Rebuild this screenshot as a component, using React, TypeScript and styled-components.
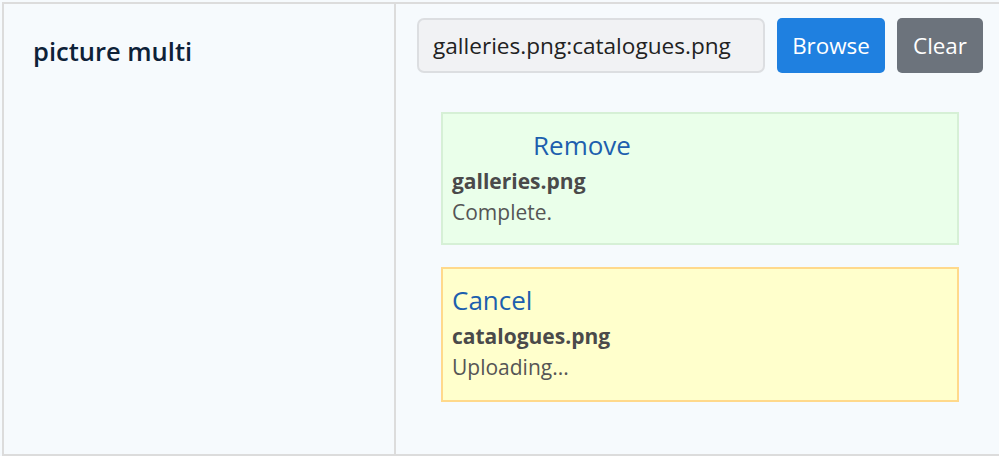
import React from "react";
import styled, { createGlobalStyle } from "styled-components";

const GlobalStyle = createGlobalStyle`
  html, body {
    margin: 0;
    padding: 0;
    overflow: hidden;
    background: #f6fafd;
    font-family: "Open Sans", "Noto Sans", "Liberation Sans", sans-serif;
  }
`;

const Table = styled.div`
  margin: 2px 0 0 2px;
  width: 1020px;
  border: 2px solid #dcdcdc;
  background: #f6fafd;
  display: flex;
  height: 450px;
`;

const LabelCell = styled.div`
  width: 392px;
  flex: none;
  border-right: 2px solid #dcdcdc;
  padding: 27px 0 0 29px;
  box-sizing: border-box;
  font-size: 25.5px;
  font-weight: 600;
  color: #0d2138;
  line-height: 40px;
`;

const ValueCell = styled.div`
  flex: 1;
  padding: 14px 0 0 21px;
  display: flex;
  flex-direction: column;
`;

const Toolbar = styled.div`
  display: flex;
  gap: 12px;
  align-items: stretch;
  height: 55px;
`;

const FileInput = styled.div`
  width: 348px;
  box-sizing: border-box;
  border: 2px solid #dcdee1;
  border-radius: 7px;
  background: #f1f2f4;
  color: #222;
  font-size: 22.6px;
  display: flex;
  align-items: center;
  padding-left: 14px;
`;

const Button = styled.button<{ $variant: "primary" | "secondary"; $w: number }>`
  width: ${(p) => p.$w}px;
  border: none;
  border-radius: 5px;
  font-family: inherit;
  font-size: 22.4px;
  color: #fff;
  background: ${(p) => (p.$variant === "primary" ? "#1f80e0" : "#6c737c")};
  padding: 0;
  cursor: pointer;
`;

const FileList = styled.div`
  margin: 39px 0 0 24px;
  display: flex;
  flex-direction: column;
  gap: 22px;
  width: 518px;
`;

const Card = styled.div<{ $state: "done" | "uploading" }>`
  box-sizing: border-box;
  height: ${(p) => (p.$state === "done" ? 133 : 135)}px;
  border: 2px solid ${(p) => (p.$state === "done" ? "#d6f0d6" : "#ffd98b")};
  background: ${(p) => (p.$state === "done" ? "#eaffea" : "#ffffcc")};
  padding: 11px 9px 0 9px;
`;

const ActionRow = styled.div`
  display: flex;
  align-items: center;
  height: 40px;
`;

const Thumb = styled.span`
  display: inline-block;
  width: 81px;
  height: 1px;
`;

const ActionLink = styled.a`
  font-size: 26px;
  color: #1d5fae;
  text-decoration: none;
  cursor: pointer;
`;

const FileName = styled.div`
  font-size: 21px;
  font-weight: 700;
  color: #4a4a4a;
  line-height: 32px;
`;

const Status = styled.div`
  font-size: 21px;
  color: #555;
  line-height: 30px;
`;

export default function App() {
  return (
    <>
      <GlobalStyle />
      <Table>
        <LabelCell>picture multi</LabelCell>
        <ValueCell>
          <Toolbar>
            <FileInput>galleries.png:catalogues.png</FileInput>
            <Button $variant="primary" $w={108}>Browse</Button>
            <Button $variant="secondary" $w={86}>Clear</Button>
          </Toolbar>
          <FileList>
            <Card $state="done">
              <ActionRow>
                <Thumb />
                <ActionLink>Remove</ActionLink>
              </ActionRow>
              <FileName>galleries.png</FileName>
              <Status>Complete.</Status>
            </Card>
            <Card $state="uploading">
              <ActionRow>
                <ActionLink>Cancel</ActionLink>
              </ActionRow>
              <FileName>catalogues.png</FileName>
              <Status>Uploading...</Status>
            </Card>
          </FileList>
        </ValueCell>
      </Table>
    </>
  );
}
